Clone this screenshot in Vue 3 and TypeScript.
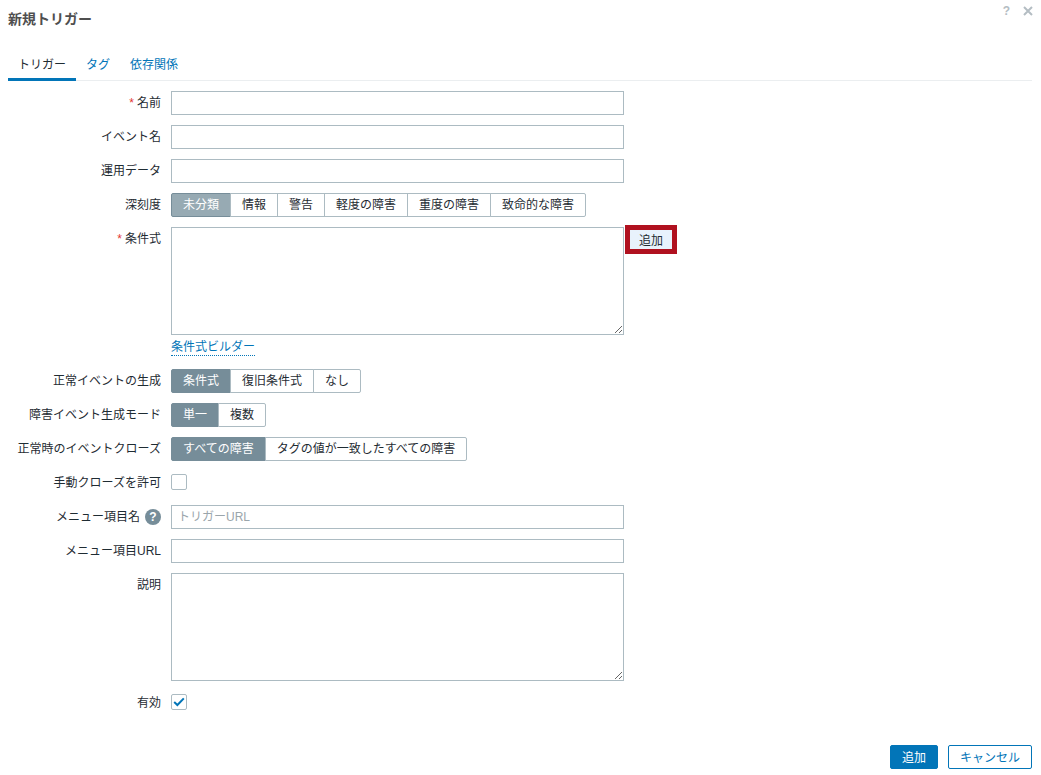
<script setup lang="ts">
interface Seg { label: string; active?: boolean; muted?: boolean }
const severities: Seg[] = [
  { label: '未分類', active: true, muted: true },
  { label: '情報' }, { label: '警告' }, { label: '軽度の障害' }, { label: '重度の障害' }, { label: '致命的な障害' },
]
const okGen: Seg[] = [{ label: '条件式', active: true }, { label: '復旧条件式' }, { label: 'なし' }]
const mode: Seg[] = [{ label: '単一', active: true }, { label: '複数' }]
const closeBy: Seg[] = [{ label: 'すべての障害', active: true }, { label: 'タグの値が一致したすべての障害' }]
</script>

<template>
  <div class="dialog">
    <header class="head">
      <h1 class="title">新規トリガー</h1>
      <div class="head-icons">
        <span class="help">?</span>
        <svg class="close" width="10" height="10" viewBox="0 0 10 10"><path d="M1 1 9 9M9 1 1 9" stroke="#b4bdc3" stroke-width="2" fill="none" /></svg>
      </div>
    </header>

    <nav class="tabs">
      <span class="tab current">トリガー</span>
      <span class="tab">タグ</span>
      <span class="tab">依存関係</span>
    </nav>

    <form class="form" @submit.prevent>
      <label class="lbl"><span class="req">*</span>名前</label>
      <input class="inp" type="text" />

      <label class="lbl">イベント名</label>
      <input class="inp" type="text" />

      <label class="lbl">運用データ</label>
      <input class="inp" type="text" />

      <label class="lbl">深刻度</label>
      <div class="seg">
        <span v-for="s in severities" :key="s.label" class="seg-item" :class="{ on: s.active, muted: s.muted }">{{ s.label }}</span>
      </div>

      <label class="lbl top"><span class="req">*</span>条件式</label>
      <div class="expr">
        <div class="expr-row">
          <textarea class="area"></textarea>
          <div class="add-mark"><button type="button" class="add">追加</button></div>
        </div>
        <a class="builder">条件式ビルダー</a>
      </div>

      <label class="lbl">正常イベントの生成</label>
      <div class="seg">
        <span v-for="s in okGen" :key="s.label" class="seg-item" :class="{ on: s.active }">{{ s.label }}</span>
      </div>

      <label class="lbl">障害イベント生成モード</label>
      <div class="seg">
        <span v-for="s in mode" :key="s.label" class="seg-item" :class="{ on: s.active }">{{ s.label }}</span>
      </div>

      <label class="lbl">正常時のイベントクローズ</label>
      <div class="seg">
        <span v-for="s in closeBy" :key="s.label" class="seg-item" :class="{ on: s.active }">{{ s.label }}</span>
      </div>

      <label class="lbl">手動クローズを許可</label>
      <div class="check-cell"><span class="check"></span></div>

      <label class="lbl">メニュー項目名<span class="q">?</span></label>
      <input class="inp" type="text" placeholder="トリガーURL" />

      <label class="lbl">メニュー項目URL</label>
      <input class="inp" type="text" />

      <label class="lbl top">説明</label>
      <textarea class="area"></textarea>

      <label class="lbl">有効</label>
      <div class="check-cell">
        <span class="check">
          <svg width="12" height="10" viewBox="0 0 12 10"><path d="M1.2 5 4.4 8 10.8 1.4" stroke="#0275b8" stroke-width="2" fill="none" /></svg>
        </span>
      </div>
    </form>

    <footer class="foot">
      <button type="button" class="btn primary">追加</button>
      <button type="button" class="btn ghost">キャンセル</button>
    </footer>
  </div>
</template>

<style>
html, body { margin: 0; background: #fff; }
</style>

<style scoped>
.dialog {
  width: 1041px;
  height: 775px;
  box-sizing: border-box;
  padding: 0 9px 0 8px;
  display: flex;
  flex-direction: column;
  font-family: "Liberation Sans", "Noto Sans CJK JP", sans-serif;
  font-size: 12px;
  color: #1f2c33;
  background: #fff;
  overflow: hidden;
}
.head { display: flex; justify-content: space-between; height: 54px; }
.title { margin: 9px 0 0; font-size: 14px; line-height: 20px; font-weight: 700; color: #4f4f4f; }
.head-icons { display: flex; align-items: center; gap: 13px; height: 22px; margin-right: -1px; }
.help { color: #b4bdc3; font-weight: 700; font-size: 12px; }
.tabs { display: flex; height: 27px; border-bottom: 1px solid #ebeef0; box-sizing: border-box; }
.tab { padding: 0 10px; line-height: 23px; height: 27px; box-sizing: border-box; color: #0275b8; }
.tab.current { color: #1f2c33; border-bottom: 3px solid #0275b8; }
.form {
  display: grid;
  grid-template-columns: 153px 1fr;
  column-gap: 10px;
  row-gap: 10px;
  margin-top: 10px;
  justify-items: start;
}
.lbl {
  justify-self: end;
  line-height: 24px;
  display: flex;
  align-items: center;
  white-space: nowrap;
}
.lbl.top { align-self: start; }
.req { color: #e33734; margin-right: 3px; }
.q {
  width: 16px; height: 16px; border-radius: 50%;
  background: #768d99; color: #fff; font-weight: 700; font-size: 12px;
  display: inline-flex; align-items: center; justify-content: center;
  margin-left: 5px;
}
.inp, .area {
  width: 453px;
  box-sizing: border-box;
  border: 1px solid #acbbc2;
  background: #fff;
  margin: 0;
  padding: 0 6px;
  font: inherit;
  outline: none;
  display: block;
}
.inp { height: 24px; }
.inp::placeholder { color: #9aa5ab; opacity: 1; }
.area { height: 108px; padding: 4px 6px; }
.seg { display: flex; height: 24px; }
.seg-item {
  box-sizing: border-box;
  padding: 0 11px;
  line-height: 22px;
  border: 1px solid #acbbc2;
  margin-left: -1px;
  background: #fff;
  white-space: nowrap;
}
.seg-item:first-child { margin-left: 0; border-radius: 2px 0 0 2px; }
.seg-item:last-child { border-radius: 0 2px 2px 0; }
.seg-item.on { background: #768d99; border-color: #768d99; color: #fff; }
.seg-item.on.muted { background: #97aab3; border-color: #768d99; }
.expr { display: flex; flex-direction: column; align-items: flex-start; }
.expr-row { display: flex; align-items: flex-start; }
.add-mark { border: 5px solid #b0111f; margin: -2px 0 0 1px; height: 29px; box-sizing: border-box; }
.add {
  display: block;
  width: 42px; height: 19px; border: 0; padding: 0 0 1px; margin: 0;
  background: #e8f2fc; color: #1f2c33; font: inherit;
}
.builder {
  margin: 4px 0 3px;
  line-height: 16px;
  color: #0275b8;
  border-bottom: 1px dotted #0275b8;
}
.check-cell { height: 24px; padding-top: 3px; box-sizing: border-box; }
.check {
  box-sizing: border-box;
  width: 16px; height: 16px;
  border: 1px solid #acbbc2; border-radius: 2px;
  display: flex; align-items: center; justify-content: center;
  background: #fff;
}
.foot { margin-top: auto; margin-bottom: 6px; display: flex; justify-content: flex-end; gap: 10px; }
.btn {
  height: 24px; box-sizing: border-box; border-radius: 2px; font: inherit; padding: 0 0 2px; margin: 0;
}
.primary { background: #0275b8; border: 1px solid #0275b8; color: #fff; width: 48px; }
.ghost { background: #fff; border: 1px solid #0275b8; color: #0275b8; width: 84px; }
</style>
